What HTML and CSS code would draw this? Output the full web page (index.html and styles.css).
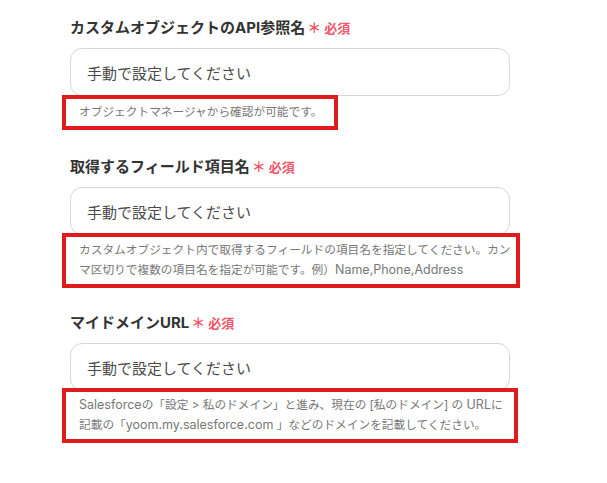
FILE: index.html
```html
<!DOCTYPE html>
<html lang="ja">
<head>
<meta charset="utf-8">
<link rel="stylesheet" href="styles.css">
</head>
<body>
<div class="form">
  <div class="field">
    <div class="label">カスタムオブジェクトのAPI参照名<span class="req"><span class="ast">＊</span>必須</span></div>
    <div class="input">手動で設定してください</div>
    <div class="note note-1">オブジェクトマネージャから確認が可能です。</div>
  </div>
  <div class="field">
    <div class="label">取得するフィールド項目名<span class="req"><span class="ast">＊</span>必須</span></div>
    <div class="input">手動で設定してください</div>
    <div class="note note-2">カスタムオブジェクト内で取得するフィールドの項目名を指定してください。カン<br>マ区切りで複数の項目名を指定が可能です。例）<span class="lat">Name,Phone,Address</span></div>
  </div>
  <div class="field">
    <div class="label">マイドメインURL<span class="req"><span class="ast">＊</span>必須</span></div>
    <div class="input">手動で設定してください</div>
    <div class="note note-3"><span class="lat">Salesforce</span>の「設定 &gt; 私のドメイン」と進み、現在の [私のドメイン] の <span class="lat">URL</span>に<br>記載の「<span class="lat">yoom.my.salesforce.com</span> 」などのドメインを記載してください。</div>
  </div>
</div>
</body>
</html>
```

FILE: styles.css
```css
html, body {
  margin: 0;
  padding: 0;
  background: #ffffff;
}
body {
  font-family: Inter, "Noto Sans CJK JP", sans-serif;
  color: #333333;
}
.form {
  padding: 18px 0 0 70px;
  width: 440px;
}
.field {
  display: flex;
  flex-direction: column;
  align-items: flex-start;
  margin-bottom: 27px;
}
.field:nth-child(2) {
  margin-bottom: 25px;
}
.label {
  font-size: 15px;
  font-weight: 700;
  line-height: 20px;
  color: #333333;
  margin-bottom: 10px;
}
.req {
  color: #f0566a;
  font-size: 13px;
  font-weight: 700;
  margin-left: 2px;
}
.ast {
  font-size: 14px;
  margin-right: 3px;
}
.input {
  box-sizing: border-box;
  width: 440px;
  height: 48px;
  border: 1px solid #d3d6dc;
  border-radius: 12px;
  padding: 0 16px;
  display: flex;
  align-items: center;
  font-size: 15px;
  color: #4a4a4a;
}
.note {
  box-sizing: border-box;
  margin-left: -8px;
  margin-top: -1px;
  border: 4px solid #e01b1b;
  padding: 3px 6px 4px 13px;
  font-size: 11.7px;
  line-height: 20px;
  color: #777777;
  white-space: nowrap;
  overflow: hidden;
}
.lat {
  font-size: 12.5px;
}
.note-1 { width: 276px; }
.note-2 { width: 458px; margin-top: -2px; }
.note-3 { width: 456px; margin-top: -3px; }
```
